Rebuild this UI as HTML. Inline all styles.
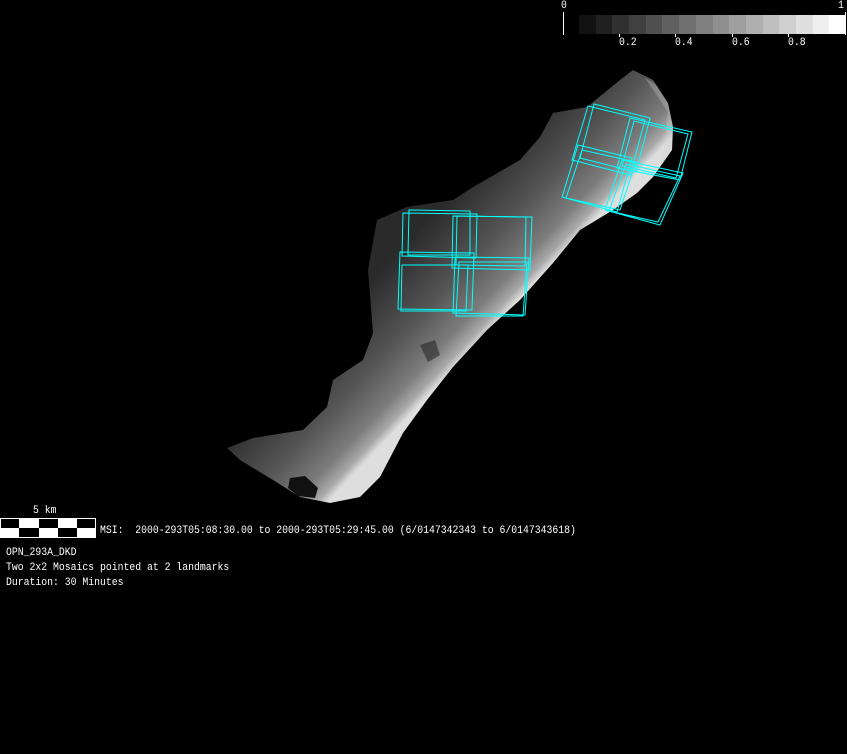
<!DOCTYPE html>
<html><head><style>
html,body{margin:0;padding:0;background:#000;}
body{width:847px;height:754px;position:relative;overflow:hidden;font-family:"Liberation Mono",monospace;color:#fff;}
.t{position:absolute;font-size:11px;white-space:pre;line-height:12px;transform:scaleX(0.89);transform-origin:0 0;}
</style></head><body>
<svg width="847" height="754" style="position:absolute;left:0;top:0">
<defs>
<linearGradient id="g" gradientUnits="userSpaceOnUse" x1="402" y1="247" x2="490" y2="330">
<stop offset="0" stop-color="#2a2a2a"/>
<stop offset="0.5" stop-color="#555555"/>
<stop offset="0.8" stop-color="#7c7c7c"/>
<stop offset="0.93" stop-color="#a8a8a8"/>
<stop offset="1" stop-color="#dedede"/>
</linearGradient>
<clipPath id="cp"><polygon points="227,448 253,438 303,430 327,407 333,380 363,360 373,333 368,270 377,220 407,207 453,200 473,187 520,160 540,137 553,113 587,107 620,80 633,70 653,80 668,103 673,127 672,150 653,177 637,193 613,210 580,230 553,263 520,300 487,330 453,367 427,400 403,433 380,477 360,497 330,503 300,497 273,480 240,460"/></clipPath>
</defs>
<g clip-path="url(#cp)">
<rect x="200" y="50" width="500" height="470" fill="url(#g)"/>
<polygon fill="#cfcfcf" opacity="0.3" points="645,78 680,100 680,170 662,165 668,112"/>
</g>
<polygon fill="#111" points="290,478 305,476 318,488 315,498 298,496 288,488"/>
<polygon fill="#333" opacity="0.7" points="420,345 435,340 440,355 428,362"/>
<g fill="none" stroke="#00ffff" stroke-width="1">
<polygon points="403,213 477,214 476,258 402,256"/>
<polygon points="409,210 470,211 470,255 408,255"/>
<polygon points="453,216 532,217 530,270 452,268"/>
<polygon points="457,216 526,217 525,266 456,265"/>
<polygon points="400,252 474,253 472,310 398,309"/>
<polygon points="402,265 468,265 466,311 401,311"/>
<polygon points="455,257 529,258 525,315 453,313"/>
<polygon points="459,262 527,262 523,316 456,316"/>
<polygon points="588,106 645,120 630,175 572,160"/>
<polygon points="594,104 650,118 636,172 580,158"/>
<polygon points="630,118 692,132 680,180 617,168"/>
<polygon points="634,121 688,134 676,178 622,166"/>
<polygon points="578,145 632,158 617,212 562,197"/>
<polygon points="582,150 636,162 620,210 566,198"/>
<polygon points="622,160 683,173 660,225 605,210"/>
<polygon points="626,164 680,176 658,222 609,211"/>
</g>
<line x1="563.5" y1="12" x2="563.5" y2="35" stroke="#fff"/>
<line x1="845.5" y1="12" x2="845.5" y2="35" stroke="#fff"/>
<line x1="619.5" y1="34" x2="619.5" y2="37" stroke="#fff"/>
<line x1="675.5" y1="34" x2="675.5" y2="37" stroke="#fff"/>
<line x1="732.5" y1="34" x2="732.5" y2="37" stroke="#fff"/>
<line x1="788.5" y1="34" x2="788.5" y2="37" stroke="#fff"/>
<rect x="0.5" y="518.5" width="95" height="19" fill="#fff" stroke="#fff"/>
<rect x="1" y="519" width="18" height="9" fill="#000"/>
<rect x="39" y="519" width="19" height="9" fill="#000"/>
<rect x="77" y="519" width="18" height="9" fill="#000"/>
<rect x="19" y="528" width="20" height="9" fill="#000"/>
<rect x="58" y="528" width="19" height="9" fill="#000"/>
</svg>
<div style="position:absolute;left:579px;top:15px;height:19px;display:flex">
<div style="width:16.7px;background:#121212"></div><div style="width:16.7px;background:#202020"></div><div style="width:16.7px;background:#303030"></div><div style="width:16.7px;background:#404040"></div><div style="width:16.7px;background:#505050"></div><div style="width:16.7px;background:#606060"></div><div style="width:16.7px;background:#707070"></div><div style="width:16.7px;background:#808080"></div><div style="width:16.7px;background:#8f8f8f"></div><div style="width:16.7px;background:#9f9f9f"></div><div style="width:16.7px;background:#afafaf"></div><div style="width:16.7px;background:#bfbfbf"></div><div style="width:16.7px;background:#cfcfcf"></div><div style="width:16.7px;background:#dfdfdf"></div><div style="width:16.7px;background:#efefef"></div><div style="width:16.7px;background:#fff"></div>
</div>
<div class="t" style="left:561px;top:0px">0</div>
<div class="t" style="left:838px;top:0px">1</div>
<div class="t" style="left:619px;top:37px">0.2</div>
<div class="t" style="left:675px;top:37px">0.4</div>
<div class="t" style="left:732px;top:37px">0.6</div>
<div class="t" style="left:788px;top:37px">0.8</div>
<div class="t" style="left:33px;top:505px">5 km</div>
<div class="t" style="left:100px;top:525px">MSI:  2000-293T05:08:30.00 to 2000-293T05:29:45.00 (6/0147342343 to 6/0147343618)</div>
<div class="t" style="left:6px;top:547px">OPN_293A_DKD</div>
<div class="t" style="left:6px;top:562px">Two 2x2 Mosaics pointed at 2 landmarks</div>
<div class="t" style="left:6px;top:577px">Duration: 30 Minutes</div>
</body></html>
